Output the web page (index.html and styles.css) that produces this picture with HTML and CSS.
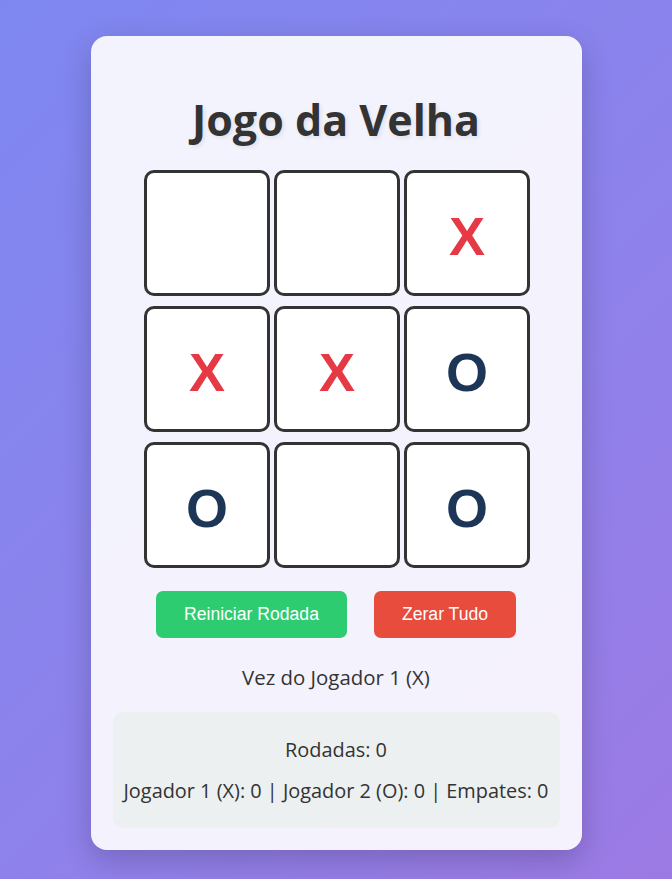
FILE: index.html
```html
<!DOCTYPE html>
<html lang="pt-BR">
<head>
<meta charset="utf-8">
<title>Jogo da Velha</title>
<link rel="stylesheet" href="styles.css">
</head>
<body>
<main class="card">
  <h1 class="title">Jogo da Velha</h1>
  <div class="board">
    <button class="cell"></button>
    <button class="cell"></button>
    <button class="cell cell-x">X</button>
    <button class="cell cell-x">X</button>
    <button class="cell cell-x">X</button>
    <button class="cell cell-o">O</button>
    <button class="cell cell-o">O</button>
    <button class="cell"></button>
    <button class="cell cell-o">O</button>
  </div>
  <div class="controls">
    <button class="btn btn-green">Reiniciar Rodada</button>
    <button class="btn btn-red">Zerar Tudo</button>
  </div>
  <p class="status">Vez do Jogador 1 (X)</p>
  <section class="score">
    <p class="score-line">Rodadas: 0</p>
    <p class="score-line score-second">Jogador 1 (X): 0 | Jogador 2 (O): 0 | Empates: 0</p>
  </section>
</main>
</body>
</html>
```
FILE: styles.css
```css
* { box-sizing: border-box; }
html, body { height: 100%; }
body {
  margin: 0;
  min-height: 100vh;
  display: flex;
  align-items: center;
  justify-content: center;
  background: linear-gradient(135deg, #7e87f0 0%, #8c82ec 50%, #9c7ae4 100%);
  font-family: "Open Sans", "Noto Sans", sans-serif;
  color: #333;
}
.card {
  width: 491px;
  margin-top: 7px;
  background: rgba(255, 255, 255, 0.9);
  border-radius: 16px;
  padding: 22px 22px 22px;
  box-shadow: 0 10px 30px rgba(0, 0, 0, 0.2);
  display: flex;
  flex-direction: column;
  align-items: center;
}
.title {
  margin: 38px 0 0;
  font-size: 43px;
  line-height: 48px;
  font-weight: 700;
  color: #333;
  text-shadow: 2px 2px 4px rgba(0, 0, 0, 0.08);
}
.board {
  margin-top: 26px;
  margin-left: 2px;
  display: grid;
  grid-template-columns: repeat(3, 126px);
  grid-auto-rows: 126px;
  column-gap: 4px;
  row-gap: 10px;
}
.cell {
  border: 3px solid #333;
  border-radius: 10px;
  background: #fff;
  font-family: "Liberation Sans", Arial, sans-serif;
  font-weight: 700;
  font-size: 54px;
  padding: 0;
  padding-top: 6px;
}
.cell-x { color: #e63946; }
.cell-o { color: #1d3557; }
.controls {
  margin-top: 23px;
  display: flex;
  gap: 27px;
}
.btn {
  border: none;
  border-radius: 7px;
  height: 47px;
  padding: 0 28px;
  font-family: "Liberation Sans", Arial, sans-serif;
  font-size: 17.6px;
  color: #fff;
}
.btn-green { background: #2ecc71; }
.btn-red { background: #e74c3c; }
.status {
  margin: 26px 0 0;
  font-size: 20.4px;
  line-height: 27px;
}
.score {
  margin-top: 21px;
  width: 100%;
  background: #ecf0f1;
  border-radius: 10px;
  padding: 24px 6px 24px;
  text-align: center;
}
.score-line {
  margin: 0;
  font-size: 19.9px;
  line-height: 27px;
}
.score-second { margin-top: 14px; }
```
